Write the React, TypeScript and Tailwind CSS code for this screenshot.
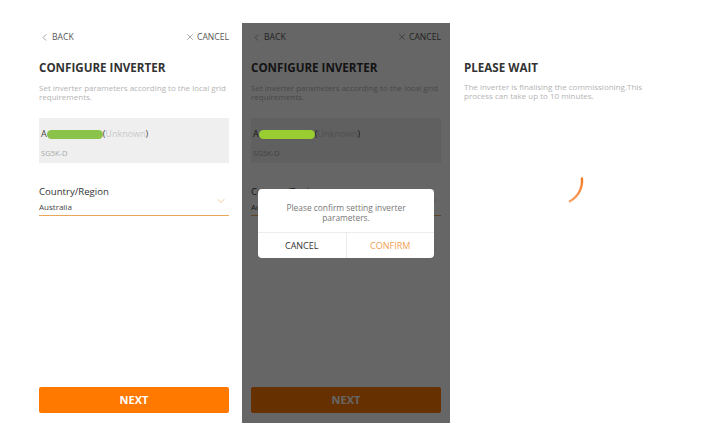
import { ChevronDown, ChevronLeft, X } from "lucide-react";

const font = { fontFamily: '"Open Sans", "Liberation Sans", sans-serif' };

const Header = () => (
  <div className="mt-[8px] flex h-[12px] items-center justify-between text-[8.6px] text-[#555]">
    <span className="flex items-center gap-[2px]">
      <ChevronLeft size={11} strokeWidth={1.2} />
      BACK
    </span>
    <span className="flex items-center gap-[2px]">
      <X size={10} strokeWidth={1.2} />
      CANCEL
    </span>
  </div>
);

const ConfigureScreen = ({ pill }: { pill: string }) => (
  <div className="flex h-full flex-col px-[9px]">
    <Header />
    <h2 className="mt-[17px] text-[11.6px] leading-[16px] font-bold text-[#333]">
      CONFIGURE INVERTER
    </h2>
    <p className="mt-[7px] text-[8px] leading-[9px] text-[#b4b4b4]">
      Set inverter parameters according to the local grid requirements.
    </p>

    <div className="mt-[17px] h-[45px] bg-[#efefef] px-[2px] pt-[10px]">
      <div className="flex h-[12px] items-center text-[9px] text-[#444]">
        <span>A</span>
        <span className={`relative z-20 h-[9px] w-[56px] rounded-full ${pill}`}></span>
        <span>(</span>
        <span className="text-[#c9c9c9]">Unknown</span>
        <span>)</span>
      </div>
      <div className="mt-[8px] text-[7.6px] leading-[10px] text-[#aaa]">SG5K-D</div>
    </div>

    <div className="mt-[22px] flex items-end justify-between border-b border-[#e9a75e] pb-[3px]">
      <div>
        <div className="text-[9.6px] leading-[13px] text-[#333]">Country/Region</div>
        <div className="mt-[3px] text-[8px] leading-[11px] text-[#444]">Australia</div>
      </div>
      <ChevronDown size={12} strokeWidth={1.2} className="mr-[2px] mb-[5px] text-[#e9a75e]" />
    </div>

    <button className="mt-auto mb-[10px] h-[26px] w-full rounded-[2px] bg-[#ff7800] text-[11px] font-bold text-white">
      NEXT
    </button>
  </div>
);

const Spinner = () => (
  <svg width="60" height="60" viewBox="0 0 60 60" className="mx-auto mt-[51px]">
    <defs>
      <linearGradient id="arc" x1="0" y1="0" x2="0" y2="1">
        <stop offset="0" stopColor="#f47920" />
        <stop offset="1" stopColor="#f8a060" />
      </linearGradient>
    </defs>
    <path
      d="M52.9 27.5 A23 23 0 0 1 40.8 50.3"
      fill="none"
      stroke="url(#arc)"
      strokeWidth="2.4"
      strokeLinecap="round"
    />
  </svg>
);

const App = () => {
  return (
    <div className="h-[435px] w-[706px] bg-white" style={font}>
      <div className="flex gap-[4px] pt-[23px] pl-[30px]">
        <section className="h-[400px] w-[208px] bg-white">
          <ConfigureScreen pill="bg-[#8bc34a]" />
        </section>

        <section className="relative h-[400px] w-[208px] bg-white">
          <ConfigureScreen pill="bg-[#9acd32]" />
          <div className="absolute inset-0 z-10 bg-black/60"></div>
          <div className="absolute top-[166px] left-[16px] z-30 w-[176px] rounded-[4px] bg-white">
            <p className="px-[20px] pt-[14px] pb-[9px] text-center text-[8.4px] leading-[10px] text-[#777]">
              Please confirm setting inverter parameters.
            </p>
            <div className="flex h-[26px] border-t border-[#ececec] text-[9px]">
              <span className="flex flex-1 items-center justify-center text-[#333]">CANCEL</span>
              <span className="flex flex-1 items-center justify-center border-l border-[#ececec] text-[#f0a050]">
                CONFIRM
              </span>
            </div>
          </div>
        </section>

        <section className="ml-[1px] h-[400px] w-[208px] bg-white px-[9px]">
          <div className="h-[20px]"></div>
          <h2 className="mt-[17px] text-[11.6px] leading-[16px] font-bold text-[#333]">PLEASE WAIT</h2>
          <p className="mt-[7px] text-[8px] leading-[8.5px] text-[#b4b4b4]">
            The inverter is finalising the commissioning.This process can take up to 10 minutes.
          </p>
          <Spinner />
        </section>
      </div>
    </div>
  );
};

export default App;
